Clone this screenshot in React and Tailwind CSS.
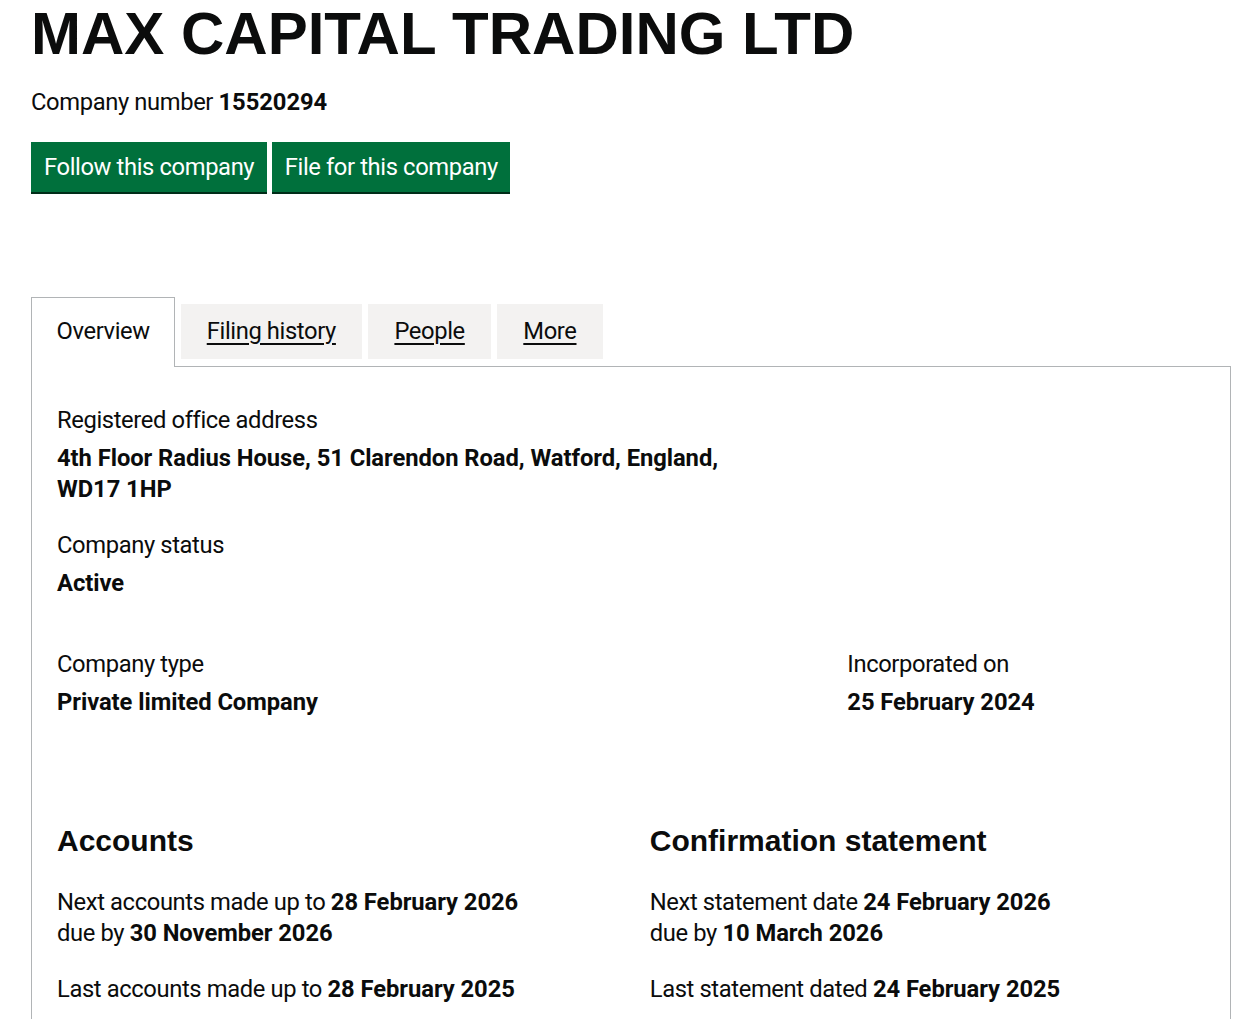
import React from "react";

const BODY = "font-['Roboto',_'Liberation_Sans',_sans-serif]";
const HEAD = "font-['Liberation_Sans',_Arial,_sans-serif]";

function B({ children }) {
  return <strong className="font-bold tracking-[-0.05px]">{children}</strong>;
}

function Row({ label, value, className = "" }) {
  return (
    <div className={className}>
      <p className="mb-[7px]">{label}</p>
      <p>
        <B>{value}</B>
      </p>
    </div>
  );
}

export default function App() {
  const tabs = ["Filing history", "People", "More"];

  return (
    <div className={`h-[1019px] overflow-hidden bg-white text-[#0b0c0c] ${BODY} text-[23.75px] leading-[31px] tracking-[-0.38px]`}>
      <div className="ml-[31px] w-[1200px]">
        {/* heading */}
        <h1 className={`${HEAD} pt-[3px] text-[60px] leading-[62px] font-bold tracking-normal`}>
          MAX CAPITAL TRADING LTD
        </h1>
        <p className="mt-[22px]">
          Company number <B>15520294</B>
        </p>

        {/* actions */}
        <div className="mt-[23.5px] flex gap-[5px]">
          <button className="bg-[#00703c] px-[13px] pt-[10px] pb-[9px] text-white leading-[31px] shadow-[0_2px_0_#002d18]">
            Follow this company
          </button>
          <button className="bg-[#00703c] px-[12.5px] pt-[10px] pb-[9px] text-white leading-[31px] shadow-[0_2px_0_#002d18]">
            File for this company
          </button>
        </div>

        {/* tabs */}
        <div className="mt-[105px] flex items-start">
          <div className="relative z-10 mb-[-1px] mr-[5.5px] border-x border-t border-[#b1b4b6] bg-white px-[24.5px] pt-[18px] pb-[20px]">
            Overview
          </div>
          {tabs.map((t) => (
            <div key={t} className="mt-[7px] mr-[6.5px] bg-[#f3f2f1] px-[26px] pt-[12px] pb-[12px]">
              <span className="underline decoration-[1.5px] underline-offset-[4px]">{t}</span>
            </div>
          ))}
        </div>

        <div className="border border-[#b1b4b6] px-[25px] pt-[38px] pb-[60px]">
          <div className="grid grid-cols-3 gap-x-[37.5px]">
            <Row
              className="col-span-2"
              label="Registered office address"
              value={<>4th Floor Radius House, 51 Clarendon Road, Watford, England,<br />WD17 1HP</>}
            />
            <Row className="col-span-3 mt-[25px]" label="Company status" value="Active" />
            <Row className="col-span-2 mt-[50px]" label="Company type" value="Private limited Company" />
            <Row className="mt-[50px]" label="Incorporated on" value="25 February 2024" />
          </div>

          <div className="mt-[104.5px] grid grid-cols-2 gap-x-[37.5px]">
            <div>
              <h2 className={`${HEAD} text-[30px] leading-[37.5px] font-bold tracking-normal`}>Accounts</h2>
              <p className="mt-[27px]">
                Next accounts made up to <B>28 February 2026</B>
                <br />
                due by <B>30 November 2026</B>
              </p>
              <p className="mt-[25px]">
                Last accounts made up to <B>28 February 2025</B>
              </p>
            </div>
            <div>
              <h2 className={`${HEAD} text-[30px] leading-[37.5px] font-bold tracking-normal`}>Confirmation statement</h2>
              <p className="mt-[27px]">
                Next statement date <B>24 February 2026</B>
                <br />
                due by <B>10 March 2026</B>
              </p>
              <p className="mt-[25px]">
                Last statement dated <B>24 February 2025</B>
              </p>
            </div>
          </div>
        </div>
      </div>
    </div>
  );
}
